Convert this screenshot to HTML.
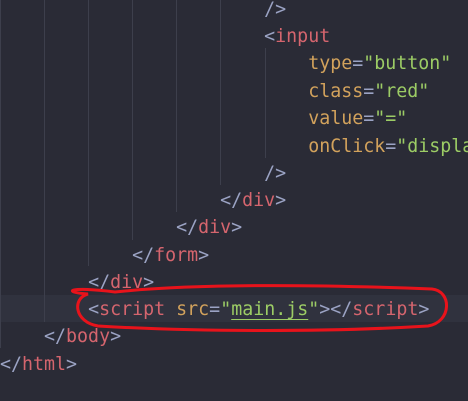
<!DOCTYPE html>
<html><head><style>
body{margin:0;width:468px;height:401px;background:#2a2b36;overflow:hidden;position:relative;font-family:"DejaVu Sans Mono","Liberation Mono",monospace;font-size:18.3px}
.l{position:absolute;left:0;height:27.3px;line-height:27.3px;white-space:pre;}
.g{position:absolute;width:1px;background:#3d3f4c}
.p{color:#9ba3c4}.t{color:#d5656e}.a{color:#d2a25c}.s{color:#9ccc65}
</style></head><body>
<div style="position:absolute;left:0;top:295px;width:468px;height:27px;background:#30323e"></div>
<div class="g" style="left:0;top:0;height:348px"></div>
<div class="g" style="left:44px;top:0;height:322px"></div>
<div class="g" style="left:88px;top:0;height:266px"></div>
<div class="g" style="left:132px;top:0;height:240px"></div>
<div class="g" style="left:176px;top:0;height:212px"></div>
<div class="g" style="left:220px;top:0;height:185px"></div>
<div class="g" style="left:265px;top:48px;height:110px"></div>
<div class="l" style="top:-4px">                        <span class="p">/&gt;</span></div>
<div class="l" style="top:23px">                        <span class="p">&lt;</span><span class="t">input</span></div>
<div class="l" style="top:50px">                            <span class="a">type</span><span class="p">=</span><span class="s">"button"</span></div>
<div class="l" style="top:78px">                            <span class="a">class</span><span class="p">=</span><span class="s">"red"</span></div>
<div class="l" style="top:105px">                            <span class="a">value</span><span class="p">=</span><span class="s">"="</span></div>
<div class="l" style="top:133px">                            <span class="a">onClick</span><span class="p">=</span><span class="s">"display</span></div>
<div class="l" style="top:160px">                        <span class="p">/&gt;</span></div>
<div class="l" style="top:187px">                    <span class="p">&lt;/</span><span class="t">div</span><span class="p">&gt;</span></div>
<div class="l" style="top:214px">                <span class="p">&lt;/</span><span class="t">div</span><span class="p">&gt;</span></div>
<div class="l" style="top:242px">            <span class="p">&lt;/</span><span class="t">form</span><span class="p">&gt;</span></div>
<div class="l" style="top:269px">        <span class="p">&lt;/</span><span class="t">div</span><span class="p">&gt;</span></div>
<div class="l" style="top:296px">        <span class="p">&lt;</span><span class="t">script</span> <span class="a">src</span><span class="p">=</span><span class="s">"<span style="text-decoration:underline;text-underline-offset:4px">main.js</span>"</span><span class="p">&gt;&lt;/</span><span class="t">script</span><span class="p">&gt;</span></div>
<div class="l" style="top:323px">    <span class="p">&lt;/</span><span class="t">body</span><span class="p">&gt;</span></div>
<div class="l" style="top:351px"><span class="p">&lt;/</span><span class="t">html</span><span class="p">&gt;</span></div>
<svg style="position:absolute;left:0;top:0" width="468" height="401"><path d="M88 294 C60 292 70 286 115 292 C200 283 330 285 432 289 C452 291 452 322 428 326 C330 332 200 332 98 326 C74 322 72 298 88 294 Z" fill="none" stroke="#e8131b" stroke-width="3"/></svg>
</body></html>
